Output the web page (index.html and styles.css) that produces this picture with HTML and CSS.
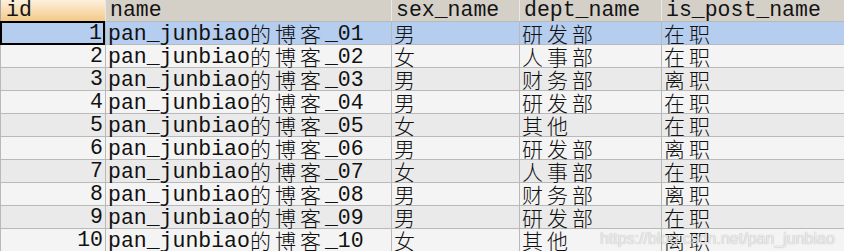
FILE: index.html
```html
<!DOCTYPE html>
<html lang="zh">
<head>
<meta charset="utf-8">
<title>Query result</title>
<link rel="stylesheet" href="styles.css">
</head>
<body>
<div class="grid">
  <div class="hdr">
    <div class="hc hc-id">id</div>
    <div class="hc">name</div>
    <div class="hc">sex_name</div>
    <div class="hc">dept_name</div>
    <div class="hc">is_post_name</div>
  </div>
  <div class="body">
    <div class="row sel"><div class="c id focus">1</div><div class="c">pan_junbiao<span class="z">的博客</span>_01</div><div class="c"><span class="z">男</span></div><div class="c"><span class="z">研发部</span></div><div class="c"><span class="z">在职</span></div></div>
    <div class="row a"><div class="c id">2</div><div class="c">pan_junbiao<span class="z">的博客</span>_02</div><div class="c"><span class="z">女</span></div><div class="c"><span class="z">人事部</span></div><div class="c"><span class="z">在职</span></div></div>
    <div class="row b"><div class="c id">3</div><div class="c">pan_junbiao<span class="z">的博客</span>_03</div><div class="c"><span class="z">男</span></div><div class="c"><span class="z">财务部</span></div><div class="c"><span class="z">离职</span></div></div>
    <div class="row a"><div class="c id">4</div><div class="c">pan_junbiao<span class="z">的博客</span>_04</div><div class="c"><span class="z">男</span></div><div class="c"><span class="z">研发部</span></div><div class="c"><span class="z">在职</span></div></div>
    <div class="row b"><div class="c id">5</div><div class="c">pan_junbiao<span class="z">的博客</span>_05</div><div class="c"><span class="z">女</span></div><div class="c"><span class="z">其他</span></div><div class="c"><span class="z">在职</span></div></div>
    <div class="row a"><div class="c id">6</div><div class="c">pan_junbiao<span class="z">的博客</span>_06</div><div class="c"><span class="z">男</span></div><div class="c"><span class="z">研发部</span></div><div class="c"><span class="z">离职</span></div></div>
    <div class="row b"><div class="c id">7</div><div class="c">pan_junbiao<span class="z">的博客</span>_07</div><div class="c"><span class="z">女</span></div><div class="c"><span class="z">人事部</span></div><div class="c"><span class="z">在职</span></div></div>
    <div class="row a"><div class="c id">8</div><div class="c">pan_junbiao<span class="z">的博客</span>_08</div><div class="c"><span class="z">男</span></div><div class="c"><span class="z">财务部</span></div><div class="c"><span class="z">离职</span></div></div>
    <div class="row b"><div class="c id">9</div><div class="c">pan_junbiao<span class="z">的博客</span>_09</div><div class="c"><span class="z">男</span></div><div class="c"><span class="z">研发部</span></div><div class="c"><span class="z">在职</span></div></div>
    <div class="row a"><div class="c id">10</div><div class="c">pan_junbiao<span class="z">的博客</span>_10</div><div class="c"><span class="z">女</span></div><div class="c"><span class="z">其他</span></div><div class="c"><span class="z">离职</span></div></div>
  </div>
  <div class="wm">https://blog.csdn.net/pan_junbiao</div>
</div>
</body>
</html>
```
FILE: styles.css
```css
html, body {
  margin: 0;
  padding: 0;
  background: #ffffff;
}
body {
  width: 844px;
  height: 251px;
  overflow: hidden;
}
.grid {
  position: relative;
  width: 844px;
  font-family: "Liberation Mono", "Courier New", monospace;
  font-size: 21.5px;
  color: #111;
}
.hdr {
  display: grid;
  grid-template-columns: 104px 285px 127px 141px 182px;
  column-gap: 1px;
  padding-left: 1px;
  background: #e9e8e3;
  height: 21px;
  box-shadow: inset 1px 0 0 #a8a8a8;
}
.hc {
  background: #d4d0c8;
  height: 21px;
  line-height: 21px;
  padding-left: 4px;
  white-space: nowrap;
  color: #141414;
}
.hc-id {
  background: linear-gradient(#fcf1de, #f4c987);
  padding-left: 5px;
}
.body {
  display: flex;
  flex-direction: column;
  row-gap: 1px;
  padding-top: 1px;
  background: #b9b9b9;
}
.row {
  display: grid;
  grid-template-columns: 104px 285px 127px 141px 182px;
  column-gap: 1px;
  padding-left: 1px;
  background: #b9b9b9;
  height: 22px;
}
.c {
  height: 22px;
  line-height: 22px;
  padding-left: 2px;
  white-space: nowrap;
  box-sizing: border-box;
}
.row.a .c { background: #f4f4f4; }
.row.b .c { background: #eaeaea; }
.row.sel .c { background: #b5cdee; }
.c.id {
  text-align: right;
  padding-left: 0;
  padding-right: 2px;
}
.c.focus {
  box-shadow: inset 0 0 0 2px #000;
  margin: -1px 0 -1px -1px;
  height: 24px;
  line-height: 24px;
  padding-right: 3px;
}
.z {
  font-family: "Noto Sans CJK SC", sans-serif;
  font-size: 21px;
  font-weight: 300;
  letter-spacing: 4px;
  vertical-align: -2px;
}
.wm {
  position: absolute;
  left: 600px;
  top: 229px;
  font-family: "Liberation Sans", Arial, sans-serif;
  font-size: 16px;
  line-height: 20px;
  color: rgba(255, 255, 255, 0.8);
  text-shadow: 0 0 1px rgba(0, 0, 0, 0.4);
  white-space: nowrap;
}
```
